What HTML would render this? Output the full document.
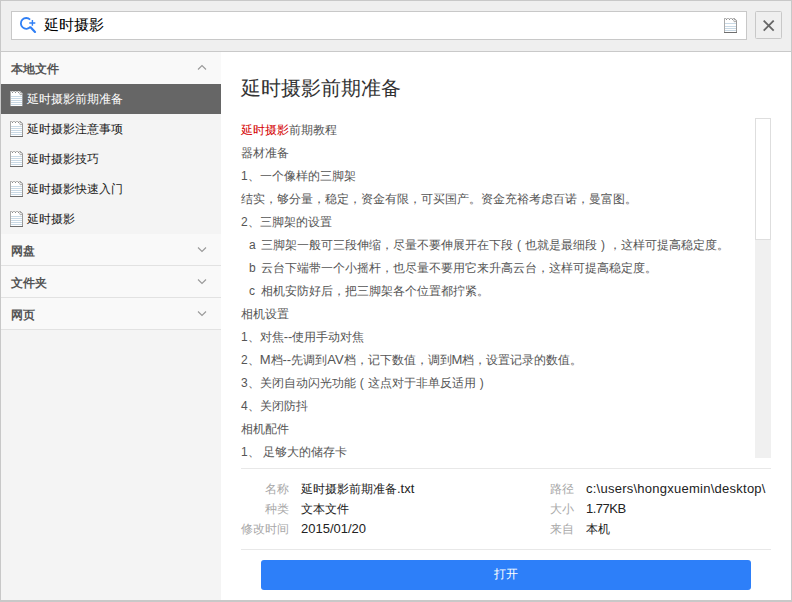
<!DOCTYPE html>
<html><head><meta charset="utf-8">
<style>
*{margin:0;padding:0;box-sizing:border-box}
html,body{width:792px;height:602px;overflow:hidden;background:#c8c8c8;font-family:"Liberation Sans",sans-serif;color:#333}
.a{position:absolute}
#top{left:1px;top:1px;width:790px;height:50px;background:#efefef}
#topline{left:1px;top:51px;width:790px;height:1px;background:#c9c9c9}
#search{left:11px;top:11px;width:736px;height:29px;background:#fff;border:1px solid #c8c8c8}
#close{left:755px;top:11px;width:27px;height:28px;border:1px solid #c8c8c8;border-radius:1.5px;background:#efefef}
#side{left:1px;top:52px;width:220px;height:548px;background:#f4f4f4}
#main{left:221px;top:52px;width:570px;height:548px;background:#fff}
.hdr{left:1px;width:220px;height:32px;background:#f9f9f9;font-size:12px;font-weight:bold;color:#555;line-height:34px;padding-left:10px;white-space:nowrap}
.hsep{left:1px;width:220px;height:1px;background:#e2e2e2}
.item{left:1px;width:220px;height:30px;font-size:12px;color:#1a1a1a;line-height:30px;padding-left:26px;white-space:nowrap}
.item.sel{background:#666;color:#fff}
.chev{left:197px;width:10px;height:6px}
.ic{left:10px;width:13px;height:16px}
.title{left:241px;top:76px;font-size:20px;color:#333;line-height:24px;white-space:nowrap}
.ln{left:241px;font-size:12px;color:#555;line-height:16px;white-space:nowrap}
.lbl{font-size:12px;color:#a8a8a8;line-height:16px;white-space:nowrap;text-align:right}
.L{font-size:13px}
.fw{display:inline-block;width:12px;text-align:center}
.val{font-size:12px;color:#222;line-height:16px;white-space:nowrap}
#sb{left:755px;top:118px;width:16px;height:340px;background:#f0f0f0}
#thumb{left:755px;top:118px;width:16px;height:122px;background:#fff;border:1px solid #dedede}
.sep2{left:241px;width:530px;height:1px;background:#e8e8e8}
#btn{left:261px;top:560px;width:490px;height:30px;background:#2d7ff9;border-radius:3px;color:#fff;font-size:12px;line-height:29px;text-align:center}
</style></head><body>
<div id="top" class="a"></div>
<div id="topline" class="a"></div>
<div id="search" class="a">
 <svg class="a" style="left:-12px;top:-12px" width="50" height="50" viewBox="0 0 50 50"><path d="M30.1 19.6 A5.4 5.4 0 1 0 30.4 26.9" fill="none" stroke="#2f7ff5" stroke-width="1.8"/><path d="M30.6 27.3 L35 31.9" stroke="#2f7ff5" stroke-width="2.2" stroke-linecap="round"/><path d="M29.3 23 h6 M32.4 20 v5.8" stroke="#2f7ff5" stroke-width="1.4"/></svg>
 <div class="a" style="left:32px;top:4px;font-size:15px;line-height:18px;color:#000;white-space:nowrap">延时摄影</div>
 <svg class="a" style="left:712px;top:6px" width="13" height="15" viewBox="0 0 13 15" shape-rendering="crispEdges"><path d="M0 0H10L13 3V15H0Z" fill="#fff"/><rect x="0" y="0" width="1" height="15" fill="#ababab"/><rect x="0" y="0" width="10" height="1" fill="#b4b4b4"/><rect x="2" y="0" width="1" height="1" fill="#e0e0e0"/><rect x="5" y="0" width="1" height="1" fill="#e0e0e0"/><rect x="8" y="0" width="1" height="1" fill="#e0e0e0"/><rect x="2" y="1" width="1" height="1" fill="#8c8c8c"/><rect x="5" y="1" width="1" height="1" fill="#8c8c8c"/><rect x="8" y="1" width="1" height="1" fill="#8c8c8c"/><rect x="12" y="3" width="1" height="12" fill="#9a9a9a"/><rect x="0" y="14" width="13" height="1" fill="#6e6e6e"/><path d="M10 0L13 3" stroke="#aaa" shape-rendering="auto"/><circle cx="10.9" cy="2.6" r="1.2" fill="#fff" stroke="#9a9a9a" stroke-width="0.9" shape-rendering="auto"/><rect x="1" y="5" width="11" height="1" fill="#c9d9e5"/><rect x="1" y="8" width="11" height="1" fill="#c9d9e5"/><rect x="1" y="10" width="11" height="1" fill="#c9d9e5"/><rect x="1" y="12" width="11" height="1" fill="#c9d9e5"/></svg>
</div>
<div id="close" class="a"><svg class="a" style="left:6.5px;top:7.5px" width="12" height="12" viewBox="0 0 12 12"><path d="M0.7 0.6L10.7 10.6M10.7 0.6L0.7 10.6" stroke="#666" stroke-width="1.8"/></svg></div>

<div id="side" class="a"></div>
<div class="hdr a" style="top:52px">本地文件</div>
<svg class="chev a" style="top:64px" viewBox="0 0 10 6"><path d="M1 5.5L5 1.5L9 5.5" fill="none" stroke="#999" stroke-width="1.1"/></svg>
<div class="item sel a" style="top:84px">延时摄影前期准备</div>
<div class="item a" style="top:114px">延时摄影注意事项</div>
<div class="item a" style="top:144px">延时摄影技巧</div>
<div class="item a" style="top:174px">延时摄影快速入门</div>
<div class="item a" style="top:204px">延时摄影</div>
<svg class="ic a" style="top:91px" width="13" height="16" viewBox="0 0 13 16" shape-rendering="crispEdges"><path d="M0 0H10L13 3V16H0Z" fill="#fff"/><rect x="0" y="0" width="1" height="16" fill="#ababab"/><rect x="0" y="0" width="10" height="1" fill="#b4b4b4"/><rect x="2" y="0" width="1" height="1" fill="#e0e0e0"/><rect x="5" y="0" width="1" height="1" fill="#e0e0e0"/><rect x="8" y="0" width="1" height="1" fill="#e0e0e0"/><rect x="2" y="1" width="1" height="1" fill="#8c8c8c"/><rect x="5" y="1" width="1" height="1" fill="#8c8c8c"/><rect x="8" y="1" width="1" height="1" fill="#8c8c8c"/><rect x="12" y="3" width="1" height="13" fill="#9a9a9a"/><rect x="0" y="15" width="13" height="1" fill="#6e6e6e"/><path d="M10 0L13 3" stroke="#aaa" shape-rendering="auto"/><circle cx="10.9" cy="2.6" r="1.2" fill="#fff" stroke="#9a9a9a" stroke-width="0.9" shape-rendering="auto"/><rect x="1" y="5" width="11" height="1" fill="#c9d9e5"/><rect x="1" y="7" width="11" height="1" fill="#c9d9e5"/><rect x="1" y="9" width="11" height="1" fill="#c9d9e5"/><rect x="1" y="11" width="11" height="1" fill="#c9d9e5"/><rect x="1" y="13" width="11" height="1" fill="#c9d9e5"/></svg>
<svg class="ic a" style="top:121px" width="13" height="16" viewBox="0 0 13 16" shape-rendering="crispEdges"><path d="M0 0H10L13 3V16H0Z" fill="#fff"/><rect x="0" y="0" width="1" height="16" fill="#ababab"/><rect x="0" y="0" width="10" height="1" fill="#b4b4b4"/><rect x="2" y="0" width="1" height="1" fill="#e0e0e0"/><rect x="5" y="0" width="1" height="1" fill="#e0e0e0"/><rect x="8" y="0" width="1" height="1" fill="#e0e0e0"/><rect x="2" y="1" width="1" height="1" fill="#8c8c8c"/><rect x="5" y="1" width="1" height="1" fill="#8c8c8c"/><rect x="8" y="1" width="1" height="1" fill="#8c8c8c"/><rect x="12" y="3" width="1" height="13" fill="#9a9a9a"/><rect x="0" y="15" width="13" height="1" fill="#6e6e6e"/><path d="M10 0L13 3" stroke="#aaa" shape-rendering="auto"/><circle cx="10.9" cy="2.6" r="1.2" fill="#fff" stroke="#9a9a9a" stroke-width="0.9" shape-rendering="auto"/><rect x="1" y="5" width="11" height="1" fill="#c9d9e5"/><rect x="1" y="7" width="11" height="1" fill="#c9d9e5"/><rect x="1" y="9" width="11" height="1" fill="#c9d9e5"/><rect x="1" y="11" width="11" height="1" fill="#c9d9e5"/><rect x="1" y="13" width="11" height="1" fill="#c9d9e5"/></svg>
<svg class="ic a" style="top:151px" width="13" height="16" viewBox="0 0 13 16" shape-rendering="crispEdges"><path d="M0 0H10L13 3V16H0Z" fill="#fff"/><rect x="0" y="0" width="1" height="16" fill="#ababab"/><rect x="0" y="0" width="10" height="1" fill="#b4b4b4"/><rect x="2" y="0" width="1" height="1" fill="#e0e0e0"/><rect x="5" y="0" width="1" height="1" fill="#e0e0e0"/><rect x="8" y="0" width="1" height="1" fill="#e0e0e0"/><rect x="2" y="1" width="1" height="1" fill="#8c8c8c"/><rect x="5" y="1" width="1" height="1" fill="#8c8c8c"/><rect x="8" y="1" width="1" height="1" fill="#8c8c8c"/><rect x="12" y="3" width="1" height="13" fill="#9a9a9a"/><rect x="0" y="15" width="13" height="1" fill="#6e6e6e"/><path d="M10 0L13 3" stroke="#aaa" shape-rendering="auto"/><circle cx="10.9" cy="2.6" r="1.2" fill="#fff" stroke="#9a9a9a" stroke-width="0.9" shape-rendering="auto"/><rect x="1" y="5" width="11" height="1" fill="#c9d9e5"/><rect x="1" y="7" width="11" height="1" fill="#c9d9e5"/><rect x="1" y="9" width="11" height="1" fill="#c9d9e5"/><rect x="1" y="11" width="11" height="1" fill="#c9d9e5"/><rect x="1" y="13" width="11" height="1" fill="#c9d9e5"/></svg>
<svg class="ic a" style="top:181px" width="13" height="16" viewBox="0 0 13 16" shape-rendering="crispEdges"><path d="M0 0H10L13 3V16H0Z" fill="#fff"/><rect x="0" y="0" width="1" height="16" fill="#ababab"/><rect x="0" y="0" width="10" height="1" fill="#b4b4b4"/><rect x="2" y="0" width="1" height="1" fill="#e0e0e0"/><rect x="5" y="0" width="1" height="1" fill="#e0e0e0"/><rect x="8" y="0" width="1" height="1" fill="#e0e0e0"/><rect x="2" y="1" width="1" height="1" fill="#8c8c8c"/><rect x="5" y="1" width="1" height="1" fill="#8c8c8c"/><rect x="8" y="1" width="1" height="1" fill="#8c8c8c"/><rect x="12" y="3" width="1" height="13" fill="#9a9a9a"/><rect x="0" y="15" width="13" height="1" fill="#6e6e6e"/><path d="M10 0L13 3" stroke="#aaa" shape-rendering="auto"/><circle cx="10.9" cy="2.6" r="1.2" fill="#fff" stroke="#9a9a9a" stroke-width="0.9" shape-rendering="auto"/><rect x="1" y="5" width="11" height="1" fill="#c9d9e5"/><rect x="1" y="7" width="11" height="1" fill="#c9d9e5"/><rect x="1" y="9" width="11" height="1" fill="#c9d9e5"/><rect x="1" y="11" width="11" height="1" fill="#c9d9e5"/><rect x="1" y="13" width="11" height="1" fill="#c9d9e5"/></svg>
<svg class="ic a" style="top:211px" width="13" height="16" viewBox="0 0 13 16" shape-rendering="crispEdges"><path d="M0 0H10L13 3V16H0Z" fill="#fff"/><rect x="0" y="0" width="1" height="16" fill="#ababab"/><rect x="0" y="0" width="10" height="1" fill="#b4b4b4"/><rect x="2" y="0" width="1" height="1" fill="#e0e0e0"/><rect x="5" y="0" width="1" height="1" fill="#e0e0e0"/><rect x="8" y="0" width="1" height="1" fill="#e0e0e0"/><rect x="2" y="1" width="1" height="1" fill="#8c8c8c"/><rect x="5" y="1" width="1" height="1" fill="#8c8c8c"/><rect x="8" y="1" width="1" height="1" fill="#8c8c8c"/><rect x="12" y="3" width="1" height="13" fill="#9a9a9a"/><rect x="0" y="15" width="13" height="1" fill="#6e6e6e"/><path d="M10 0L13 3" stroke="#aaa" shape-rendering="auto"/><circle cx="10.9" cy="2.6" r="1.2" fill="#fff" stroke="#9a9a9a" stroke-width="0.9" shape-rendering="auto"/><rect x="1" y="5" width="11" height="1" fill="#c9d9e5"/><rect x="1" y="7" width="11" height="1" fill="#c9d9e5"/><rect x="1" y="9" width="11" height="1" fill="#c9d9e5"/><rect x="1" y="11" width="11" height="1" fill="#c9d9e5"/><rect x="1" y="13" width="11" height="1" fill="#c9d9e5"/></svg>
<div class="hdr a" style="top:234px">网盘</div>
<div class="hsep a" style="top:265px"></div>
<div class="hdr a" style="top:266px">文件夹</div>
<div class="hsep a" style="top:297px"></div>
<div class="hdr a" style="top:298px">网页</div>
<div class="hsep a" style="top:329px"></div>
<svg class="chev a" style="top:247px" viewBox="0 0 10 6"><path d="M1 0.5L5 4.5L9 0.5" fill="none" stroke="#999" stroke-width="1.1"/></svg>
<svg class="chev a" style="top:279px" viewBox="0 0 10 6"><path d="M1 0.5L5 4.5L9 0.5" fill="none" stroke="#999" stroke-width="1.1"/></svg>
<svg class="chev a" style="top:311px" viewBox="0 0 10 6"><path d="M1 0.5L5 4.5L9 0.5" fill="none" stroke="#999" stroke-width="1.1"/></svg>

<div id="main" class="a"></div>
<div class="title a">延时摄影前期准备</div>
<div class="ln a" style="top:122px"><span style="color:#d40000">延时摄影</span>前期教程</div>
<div class="ln a" style="top:145px">器材准备</div>
<div class="ln a" style="top:168px">1、一个像样的三脚架</div>
<div class="ln a" style="top:191px">结实，够分量，稳定，资金有限，可买国产。资金充裕考虑百诺，曼富图。</div>
<div class="ln a" style="top:214px">2、三脚架的设置</div>
<div class="ln a" style="top:237px;left:249px"><span style="display:inline-block;width:12px">a</span>三脚架一般可三段伸缩，尽量不要伸展开在下段<span class="fw">(</span>也就是最细段<span class="fw">)</span>，这样可提高稳定度。</div>
<div class="ln a" style="top:260px;left:249px"><span style="display:inline-block;width:12px">b</span>云台下端带一个小摇杆，也尽量不要用它来升高云台，这样可提高稳定度。</div>
<div class="ln a" style="top:283px;left:249px"><span style="display:inline-block;width:12px">c</span>相机安防好后，把三脚架各个位置都拧紧。</div>
<div class="ln a" style="top:306px">相机设置</div>
<div class="ln a" style="top:329px">1、对焦<span class="L">--</span>使用手动对焦</div>
<div class="ln a" style="top:352px">2、<span class="L">M</span>档<span class="L">--</span>先调到<span class="L">AV</span>档，记下数值，调到<span class="L">M</span>档，设置记录的数值。</div>
<div class="ln a" style="top:375px">3、关闭自动闪光功能<span class="fw">(</span>这点对于非单反适用<span class="fw">)</span></div>
<div class="ln a" style="top:398px">4、关闭防抖</div>
<div class="ln a" style="top:421px">相机配件</div>
<div class="ln a" style="top:444px">1、 足够大的储存卡</div>
<div id="sb" class="a"></div>
<div id="thumb" class="a"></div>

<div class="sep2 a" style="top:468px"></div>
<div class="lbl a" style="left:201px;width:88px;top:481px">名称</div>
<div class="val a" style="left:301px;top:481px">延时摄影前期准备<span class="L">.txt</span></div>
<div class="lbl a" style="left:201px;width:88px;top:501px">种类</div>
<div class="val a" style="left:301px;top:501px">文本文件</div>
<div class="lbl a" style="left:201px;width:88px;top:521px">修改时间</div>
<div class="val a" style="left:301px;top:521px"><span class="L">2015/01/20</span></div>
<div class="lbl a" style="left:486px;width:88px;top:481px">路径</div>
<div class="val a" style="left:586px;top:481px"><span class="L" style="letter-spacing:0.25px">c:\users\hongxuemin\desktop\</span></div>
<div class="lbl a" style="left:486px;width:88px;top:501px">大小</div>
<div class="val a" style="left:586px;top:501px"><span class="L" style="letter-spacing:-0.5px">1.77KB</span></div>
<div class="lbl a" style="left:486px;width:88px;top:521px">来自</div>
<div class="val a" style="left:586px;top:521px">本机</div>
<div class="sep2 a" style="top:549px"></div>
<div id="btn" class="a">打开</div>
</body></html>
